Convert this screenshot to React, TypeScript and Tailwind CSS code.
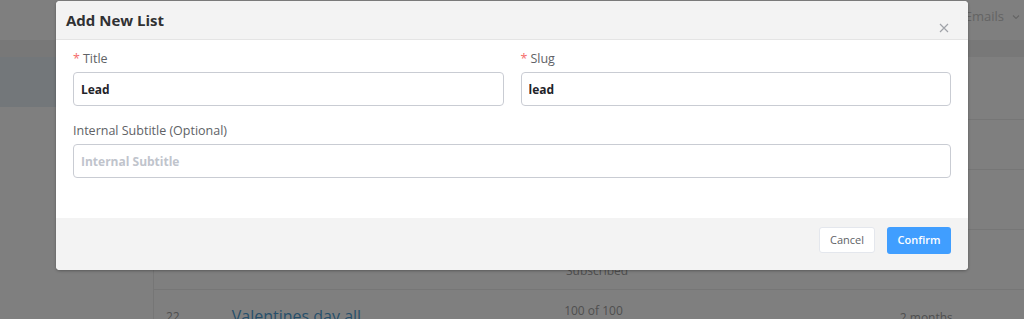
import type { FC } from "react";

const font = { fontFamily: '"Open Sans", "Noto Sans", "Liberation Sans", sans-serif' };

const Field: FC<{ label: string; required?: boolean; value?: string; placeholder?: string }> = ({
  label,
  required,
  value,
  placeholder,
}) => (
  <div className="flex flex-col">
    <label className="text-[12.5px] leading-[20px] text-[#606266] mb-[3px]">
      {required && <span className="text-[#f56c6c] mr-[3px]">*</span>}
      {label}
    </label>
    <input
      readOnly
      value={value ?? ""}
      placeholder={placeholder}
      className="h-[34px] w-full rounded-[4px] border border-[#c9ccd3] bg-white px-[7px] text-[12px] font-bold text-[#1f2329] placeholder:text-[#c0c4cc] outline-none"
    />
  </div>
);

export default function App() {
  return (
    <div className="relative w-[1024px] h-[319px] overflow-hidden bg-white" style={font}>
      {/* PAGE BEHIND */}
      <div className="flex flex-col h-full">
        <div className="h-[40px] shrink-0 flex items-center justify-end pr-[3px] pb-[6px] bg-white">
          <span className="text-[13px] text-[#c8c8c8] flex items-center gap-[7px]">
            Emails
            <svg width="10" height="10" viewBox="0 0 10 10" fill="none" stroke="#c8c8c8" strokeWidth="1.2">
              <path d="M2 3.5l3 3 3-3" />
            </svg>
          </span>
        </div>
        <div className="h-[17px] shrink-0 bg-[#f1f1f1]" />
        <div className="flex flex-1 min-h-0">
          <div className="w-[153px] shrink-0">
            <div className="h-[50px] bg-[#e6eef5]" />
          </div>
          <div className="flex-1 border-l border-[#ececec] flex flex-col">
            <div className="h-[63px] shrink-0 border-b border-[#ececec]" />
            <div className="h-[50px] shrink-0 border-b border-[#ececec]" />
            <div className="h-[60px] shrink-0 border-b border-[#ececec]" />
            <div className="h-[60px] shrink-0 border-b border-[#ececec] flex">
              <span className="ml-[412px] mt-[32px] text-[12px] text-[#a0a0a0]">Subscribed</span>
            </div>
            <div className="flex shrink-0 items-start text-[12px]">
              <span className="ml-[12px] mt-[18px] text-[#a0a0a0]">22</span>
              <span className="ml-[52px] mt-[14px] text-[16px] text-[#4f9fd6]">Valentines day all</span>
              <span className="ml-[203px] mt-[12px] text-[#a0a0a0]">100 of 100</span>
              <span className="ml-[277px] mt-[19px] text-[#a0a0a0]">2 months</span>
            </div>
          </div>
        </div>
      </div>

      {/* OVERLAY */}
      <div className="absolute inset-0 bg-black/50" />

      {/* MODAL */}
      <div className="absolute left-[56px] top-[1px] w-[912px] rounded-[4px] bg-white overflow-hidden shadow-[0_1px_3px_rgba(0,0,0,0.3)]">
        <div className="h-[39px] bg-[#f3f3f3] border-b border-[#e4e4e4] flex justify-between pl-[10px] pr-[19px]">
          <h2 className="text-[15px] font-bold text-[#303133] leading-[39px]">Add New List</h2>
          <svg className="mt-[22px]" width="10" height="10" viewBox="0 0 10 10" stroke="#a0a3a9" strokeWidth="1.2">
            <path d="M1 1l8 8M9 1l-8 8" />
          </svg>
        </div>

        <div className="px-[17px] pt-[9px] pb-[40px] flex flex-col gap-[15px]">
          <div className="grid grid-cols-2 gap-[17px]">
            <Field label="Title" required value="Lead" />
            <Field label="Slug" required value="lead" />
          </div>
          <Field label="Internal Subtitle (Optional)" placeholder="Internal Subtitle" />
        </div>

        <div className="h-[52px] bg-[#f3f3f3] flex items-start justify-end gap-[12px] pt-[9px] pr-[17px]">
          <button className="h-[26px] w-[56px] rounded-[3px] border border-[#e4e7ed] bg-white text-[11px] text-[#606266]">
            Cancel
          </button>
          <button className="h-[27px] w-[64px] rounded-[3px] bg-[#409eff] text-[11px] font-semibold text-white">
            Confirm
          </button>
        </div>
      </div>
    </div>
  );
}
